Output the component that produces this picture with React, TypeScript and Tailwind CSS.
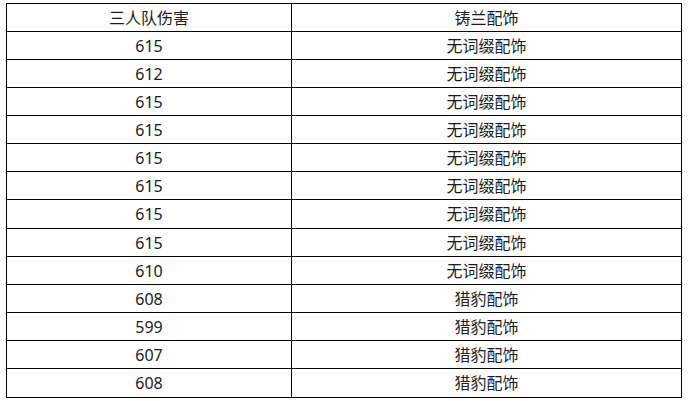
import React from "react";

const rows: [string, string][] = [
  ["615", "无词缀配饰"],
  ["612", "无词缀配饰"],
  ["615", "无词缀配饰"],
  ["615", "无词缀配饰"],
  ["615", "无词缀配饰"],
  ["615", "无词缀配饰"],
  ["615", "无词缀配饰"],
  ["615", "无词缀配饰"],
  ["610", "无词缀配饰"],
  ["608", "猎豹配饰"],
  ["599", "猎豹配饰"],
  ["607", "猎豹配饰"],
  ["608", "猎豹配饰"],
];

export default function App() {
  const all: [string, string][] = [["三人队伤害", "铸兰配饰"], ...rows];
  return (
    <div className="w-[689px] h-[401px] bg-white pt-[3px] pl-[6px]">
      <div
        className="w-[676px] border-t border-l border-black text-[16px] text-[#1c1c1c]"
        style={{ fontFamily: '"Noto Sans", "Noto Sans CJK SC", sans-serif' }}
      >
        {all.map((r, i) => (
          <div
            key={i}
            className={`flex ${i === 7 || i === 13 ? "h-[29px]" : "h-[28px]"}`}
          >
            <div className="w-[285px] border-r border-b border-black flex items-center justify-center leading-none">
              {r[0]}
            </div>
            <div className="w-[390px] border-r border-b border-black flex items-center justify-center leading-none">
              {r[1]}
            </div>
          </div>
        ))}
      </div>
    </div>
  );
}
